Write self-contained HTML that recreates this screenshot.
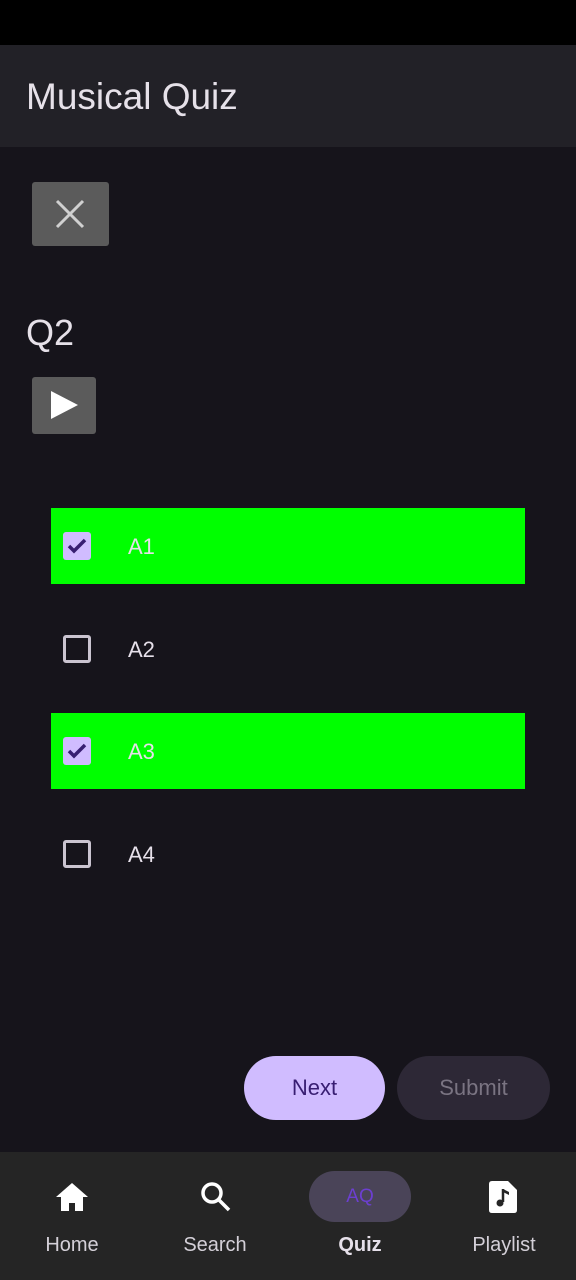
<!DOCTYPE html>
<html><head><meta charset="utf-8"><style>
*{margin:0;padding:0;box-sizing:border-box}
body{width:576px;height:1280px;background:#16141b;font-family:"Liberation Sans",sans-serif;position:relative;overflow:hidden;color:#e6e0ea}
.abs{position:absolute}
.status{top:0;left:0;width:576px;height:45px;background:#000}
.bar{top:45px;left:0;width:576px;height:102px;background:#222127}
.title{left:26px;top:76px;font-size:37px;color:#e6e1e9}
.btn{background:#5b5b5b;border-radius:3px}
.row{left:51px;width:474px;height:76px}
.cb{left:63px;width:28px;height:28px;border-radius:3px}
.lbl{left:128px;font-size:22px}
.nav{top:1152px;left:0;width:576px;height:128px;background:#252525}
.nl{top:1234px;font-size:20px;color:#d4d0d8;text-align:center;width:120px}
</style></head><body>
<div class="abs status"></div>
<div class="abs bar"></div>
<div class="abs title">Musical Quiz</div>

<div class="abs btn" style="left:32px;top:182px;width:77px;height:64px"></div>
<svg class="abs" style="left:54px;top:198px" width="32" height="32"><path d="M3 3L29 29M29 3L3 29" stroke="#d0d0d0" stroke-width="3"/></svg>

<div class="abs" style="left:26px;top:312px;font-size:36px;color:#e6e1e9">Q2</div>

<div class="abs btn" style="left:32px;top:377px;width:64px;height:57px"></div>
<svg class="abs" style="left:50px;top:390px" width="30" height="30"><path d="M1 1L28 15L1 29Z" fill="#fff"/></svg>

<div class="abs row" style="top:508px;background:#00ff00"></div>
<div class="abs cb" style="top:532px;background:#d0bcff"></div>
<svg class="abs" style="left:63px;top:532px" width="28" height="28"><path d="M6 14L11 19L22 8" stroke="#381e72" stroke-width="3.5" fill="none"/></svg>
<div class="abs lbl" style="top:534px">A1</div>

<div class="abs cb" style="top:635px;border:3px solid #cac4d0"></div>
<div class="abs lbl" style="top:637px">A2</div>

<div class="abs row" style="top:713px;background:#00ff00"></div>
<div class="abs cb" style="top:737px;background:#d0bcff"></div>
<svg class="abs" style="left:63px;top:737px" width="28" height="28"><path d="M6 14L11 19L22 8" stroke="#381e72" stroke-width="3.5" fill="none"/></svg>
<div class="abs lbl" style="top:739px">A3</div>

<div class="abs cb" style="top:840px;border:3px solid #cac4d0"></div>
<div class="abs lbl" style="top:842px">A4</div>

<div class="abs" style="left:244px;top:1056px;width:141px;height:64px;border-radius:32px;background:#d0bcff;color:#381e72;font-size:22px;text-align:center;line-height:64px">Next</div>
<div class="abs" style="left:397px;top:1056px;width:153px;height:64px;border-radius:32px;background:#2d2836;color:#7a7482;font-size:22px;text-align:center;line-height:64px">Submit</div>

<div class="abs nav"></div>
<svg class="abs" style="left:55px;top:1182px" width="34" height="30"><path d="M17 1L1 15H6V29H14V21H20V29H28V15H33Z" fill="#fff"/></svg>
<svg class="abs" style="left:199px;top:1180px" width="34" height="34"><circle cx="13" cy="13" r="9" stroke="#fff" stroke-width="3.5" fill="none"/><path d="M20 20L30 30" stroke="#fff" stroke-width="3.5"/></svg>
<div class="abs" style="left:309px;top:1171px;width:102px;height:51px;border-radius:26px;background:#4a4458;color:#6c3fd0;font-size:19px;text-align:center;line-height:51px">AQ</div>
<svg class="abs" style="left:488px;top:1180px" width="32" height="34"><path d="M4 1H20L29 10V30Q29 33 26 33H4Q1 33 1 30V4Q1 1 4 1Z" fill="#fff"/><path d="M15 9V22" stroke="#252525" stroke-width="2.5"/><circle cx="12" cy="23" r="3.5" fill="#252525"/><path d="M15 9L21 12V15L15 12Z" fill="#252525"/></svg>
<div class="abs nl" style="left:12px">Home</div>
<div class="abs nl" style="left:155px">Search</div>
<div class="abs nl" style="left:300px;font-weight:bold;color:#e6e0ea">Quiz</div>
<div class="abs nl" style="left:444px">Playlist</div>
</body></html>
